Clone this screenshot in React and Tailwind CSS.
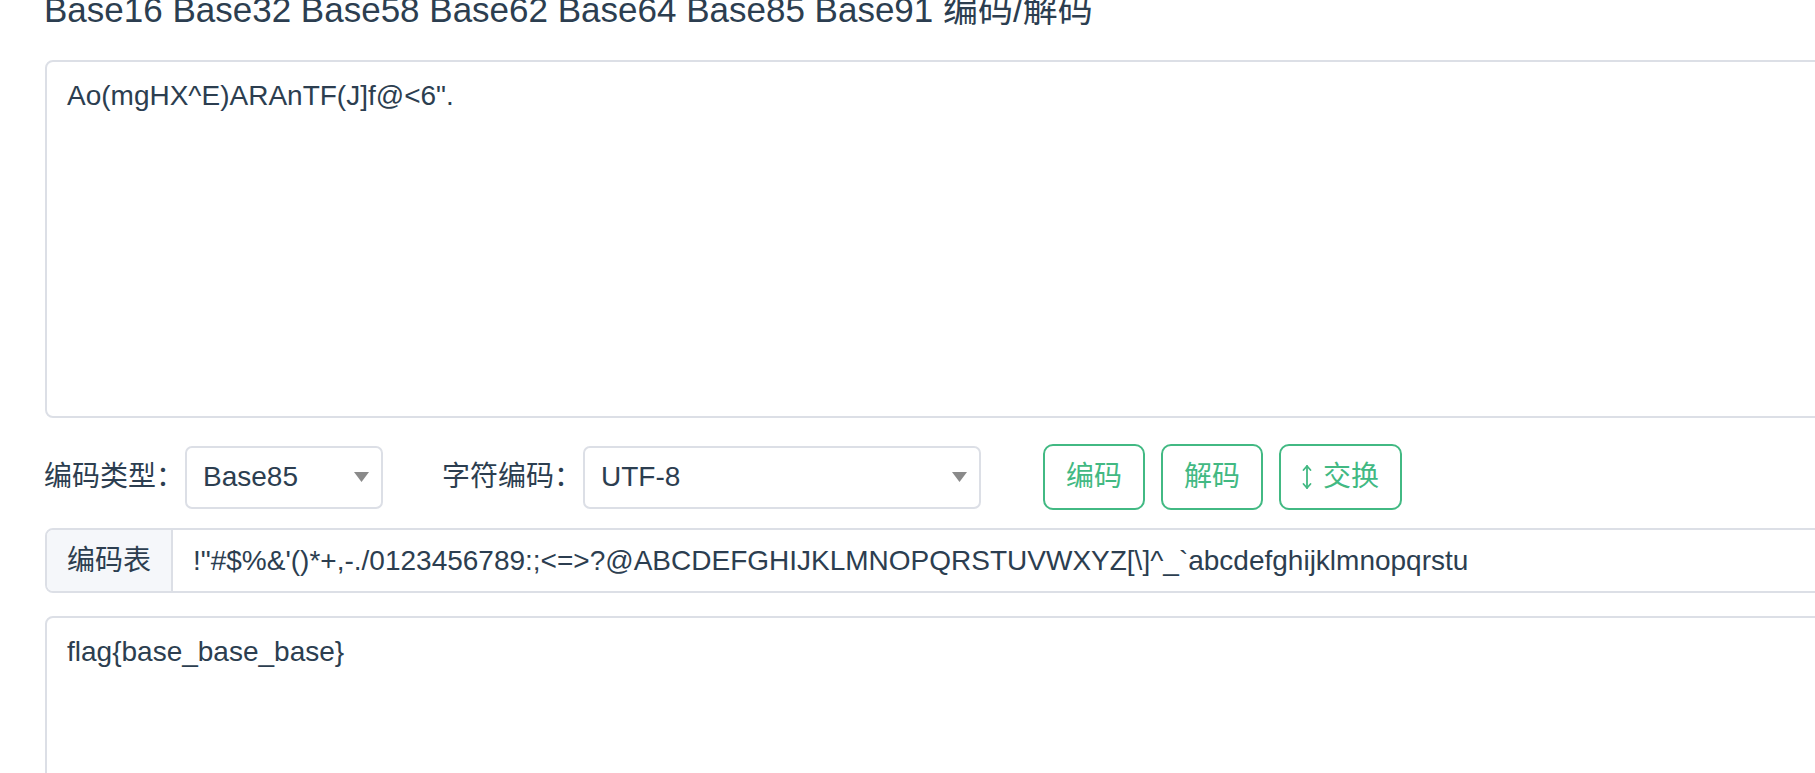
import { useState } from "react";

const INPUT_TEXT = `Ao(mgHX^E)ARAnTF(J]f@<6".`;
const OUTPUT_TEXT = "flag{base_base_base}";
const ALPHABET = "!\"#$%&'()*+,-./0123456789:;<=>?@ABCDEFGHIJKLMNOPQRSTUVWXYZ[\\]^_`abcdefghijklmnopqrstu";

const Caret = () => (
  <svg width="15" height="10" viewBox="0 0 15 10" className="shrink-0">
    <path d="M0 0 L15 0 L7.5 10 Z" fill="#8a8a8a" />
  </svg>
);

// thin up/down arrow used on the swap button
const SortIcon = () => (
  <svg width="10" height="26" viewBox="0 0 10 26" className="shrink-0 mr-[11px]" fill="none" stroke="#42b983" strokeWidth="1.8" strokeLinecap="round" strokeLinejoin="round">
    <path d="M5 2 L5 24" />
    <path d="M1.5 6 L5 2 L8.5 6" />
    <path d="M1.5 20 L5 24 L8.5 20" />
  </svg>
);

const FakeSelect = ({ value, width }) => (
  <div
    className={`${width} h-[63px] flex items-center justify-between border-2 border-[#dcdfe6] rounded-[7px] bg-white pl-4 pr-[12px] text-[28px] leading-[42px] text-[#2c3e50]`}
  >
    <span>{value}</span>
    <Caret />
  </div>
);

const GreenButton = ({ children, onClick }) => (
  <button
    onClick={onClick}
    className="h-[66px] px-[21px] border-2 border-[#42b983] rounded-[10px] bg-white text-[28px] leading-[42px] text-[#42b983] flex items-center"
  >
    {children}
  </button>
);

export default function App() {
  const [input, setInput] = useState(INPUT_TEXT);
  const [output, setOutput] = useState(OUTPUT_TEXT);

  const swap = () => {
    setInput(output);
    setOutput(input);
  };

  return (
    <div className="w-full h-screen overflow-hidden bg-white font-['Liberation_Sans','Noto_Sans_CJK_SC',sans-serif] text-[#2c3e50]">
      <div className="w-[1900px] pl-[45px]">
        <div className="-mt-[11px] text-[35px] leading-[42px] -ml-px">
          Base16 Base32 Base58 Base62 Base64 Base85 Base91 编码/解码
        </div>

        <textarea
          value={input}
          onChange={e => setInput(e.target.value)}
          className="mt-[29px] block w-full h-[358px] border-2 border-[#dcdfe6] rounded-[8px] pt-[13px] pl-[20px] pr-5 text-[28px] leading-[42px] text-[#2c3e50] resize-none outline-none"
        />

        <div className="mt-[26px] flex items-center h-[66px]">
          <span className="text-[28px] leading-[42px] -ml-px">编码类型：</span>
          <div className="ml-[1px]">
            <FakeSelect value="Base85" width="w-[198px]" />
          </div>
          <span className="ml-[59px] text-[28px] leading-[42px]">字符编码：</span>
          <div className="ml-[1px]">
            <FakeSelect value="UTF-8" width="w-[398px]" />
          </div>
          <div className="ml-[62px] flex gap-4">
            <GreenButton>编码</GreenButton>
            <GreenButton>解码</GreenButton>
            <GreenButton onClick={swap}>
              <SortIcon />
              交换
            </GreenButton>
          </div>
        </div>

        <div className="mt-[18px] flex h-[65px] border-2 border-[#dcdfe6] rounded-[8px] overflow-hidden">
          <div className="w-[126px] shrink-0 bg-[#f5f7fa] border-r-2 border-[#dcdfe6] flex items-center justify-center text-[28px] leading-[42px]">
            编码表
          </div>
          <div className="flex items-center pl-[20px] text-[28px] leading-[42px] whitespace-nowrap">
            {ALPHABET}
          </div>
        </div>

        <textarea
          value={output}
          onChange={e => setOutput(e.target.value)}
          className="mt-[23px] block w-full h-[358px] border-2 border-[#dcdfe6] rounded-[8px] pt-[13px] pl-[20px] pr-5 text-[28px] leading-[42px] text-[#2c3e50] resize-none outline-none"
        />
      </div>
    </div>
  );
}
